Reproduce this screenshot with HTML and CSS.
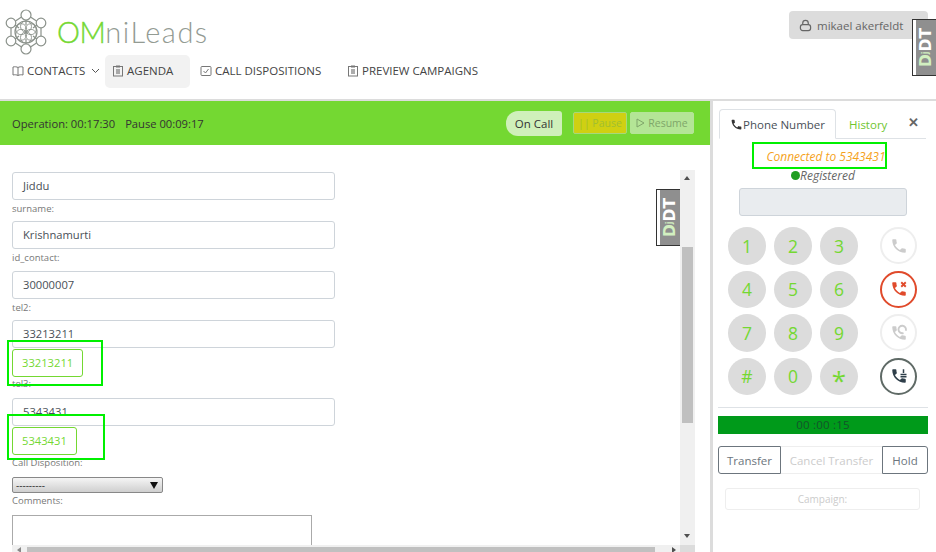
FILE: index.html
```html
<!DOCTYPE html>
<html lang="en">
<head>
<meta charset="utf-8">
<title>OMniLeads</title>
<link rel="stylesheet" href="styles.css">
</head>
<body>
<svg width="0" height="0" class="defs">
  <symbol id="phone" viewBox="0 0 24 24"><path d="M6.600 10.800c1.400 2.800 3.800 5.100 6.600 6.600l2.200-2.200c.3-.3.7-.4 1-.2 1.100.4 2.300.6 3.600.6.600 0 1 .4 1 1V20c0 .6-.4 1-1 1C10.600 21 3 13.400 3 4c0-.6.4-1 1-1h3.500c.6 0 1 .4 1 1 0 1.300.2 2.500.6 3.600.1.300 0 .7-.2 1z"/></symbol>
  <symbol id="clip" viewBox="0 0 12 12"><rect x="1.500" y="1.500" width="9" height="9.500" fill="none" stroke="currentColor" stroke-width="1"/><rect x="4" y="4" width="4" height="5" fill="currentColor" opacity=".6"/><rect x="4" y="0.500" width="4" height="2" fill="currentColor"/></symbol>
</svg>
<header class="top">
  <div class="brand-row">
    <div class="brand">
      <svg class="logo" width="44" height="48" viewBox="0 0 44 48" fill="none" stroke="#8b928b" stroke-width="1.200">
        <circle cx="21" cy="7" r="5"/><circle cx="21" cy="41" r="5"/>
        <circle cx="6" cy="15" r="4.800"/><circle cx="36" cy="15" r="4.800"/>
        <circle cx="6" cy="33" r="4.800"/><circle cx="36" cy="33" r="4.800"/>
        <path d="M21 12v5M21 31v5M10 17l4 3M32 17l-4 3M10 31l4-3M32 31l-4-3M6 20v8M36 20v8M10.500 13l6-4M31.500 13l-6-4M10.500 35l6 4M31.500 35l-6 4"/>
        <circle cx="21" cy="24" r="11"/>
        <g stroke-width=".9">
        <circle cx="21" cy="18.500" r="5.500"/><circle cx="21" cy="29.500" r="5.500"/>
        <circle cx="16.200" cy="21.200" r="5.500"/><circle cx="25.800" cy="21.200" r="5.500"/>
        <circle cx="16.200" cy="26.800" r="5.500"/><circle cx="25.800" cy="26.800" r="5.500"/>
        </g>
      </svg>
      <span class="wordmark"><span class="wm-green">OM</span>niLeads</span>
    </div>
    <button class="user">
      <svg width="13" height="13" viewBox="0 0 14 14" fill="none" stroke="#666" stroke-width="1.300"><path d="M4 6V4.500a3 3 0 0 1 6 0V6"/><rect x="1.500" y="6" width="11" height="6.500" rx="2.500"/></svg>
      <span>mikael akerfeldt</span>
    </button>
  </div>
  <nav class="nav">
    <a class="nav-item contacts"><svg width="12" height="12" viewBox="0 0 12 12" fill="none" stroke="currentColor"><path d="M6 2.500C5 1.800 2.500 1.500 1 2v8c1.500-.5 4-.2 5 .5 1-.7 3.500-1 5-.5V2C9.500 1.500 7 1.800 6 2.500zM6 2.500v8"/></svg>CONTACTS<svg class="chev" width="9" height="6" viewBox="0 0 9 6" fill="none" stroke="#555"><path d="M1 1l3.500 3.500L8 1"/></svg></a>
    <a class="nav-item agenda active"><svg width="12" height="12"><use href="#clip"/></svg>AGENDA</a>
    <a class="nav-item disp"><svg width="12" height="12" viewBox="0 0 12 12" fill="none" stroke="currentColor"><rect x="1" y="1.500" width="10" height="9" rx="1"/><path d="M3.500 6l2 2 3-4"/></svg>CALL DISPOSITIONS</a>
    <a class="nav-item"><svg width="12" height="12"><use href="#clip"/></svg>PREVIEW CAMPAIGNS</a>
  </nav>
</header>
<main class="layout">
  <section class="left">
    <div class="statusbar">
      <span class="timers"><span>Operation: 00:17:30</span><span>Pause 00:09:17</span></span>
      <span class="actions">
        <span class="oncall">On Call</span>
        <button class="act pause">||&nbsp;Pause</button>
        <button class="act resume"><svg width="9" height="10" viewBox="0 0 9 10" fill="none" stroke="currentColor"><path d="M1 1l7 4-7 4z"/></svg>Resume</button>
      </span>
    </div>
    <div class="scrollarea">
      <div class="viewport">
        <form class="form">
          <div class="input first">Jiddu</div>
          <label>surname:</label>
          <div class="input">Krishnamurti</div>
          <label class="id-label">id_contact:</label>
          <div class="input">30000007</div>
          <label>tel2:</label>
          <div class="input">33213211</div>
          <button type="button" class="dial-link">33213211</button>
          <label class="tel3">tel3:</label>
          <div class="input">5343431</div>
          <button type="button" class="dial-link">5343431</button>
          <label class="disp-label">Call Disposition:</label>
          <div class="select"><span>---------</span><span class="sel-arrow"></span></div>
          <label class="comment-label">Comments:</label>
          <div class="textarea"></div>
        </form>
        <div class="hbar"><span class="harrow left-a"></span><span class="hthumb"></span><span class="harrow right-a"></span></div>
      </div>
      <div class="vbar"><span class="varrow up"></span><span class="vthumb"></span><span class="varrow down"></span><span class="corner"></span></div>
    </div>
    <div class="ddt ddt-left"><span class="ddt-inner"><span class="ddt-d">D<small>j</small></span>DT</span></div>
    <div class="hl hl-one"></div>
    <div class="hl hl-two"></div>
  </section>
  <aside class="phone">
    <div class="tabs">
      <span class="tab active"><svg width="13" height="13"><use href="#phone"/></svg>Phone Number</span>
      <span class="tab hist">History</span>
      <span class="close">✕</span>
    </div>
    <div class="connected">Connected to 5343431</div>
    <div class="registered"><span class="dot"></span>Registered</div>
    <div class="display"></div>
    <div class="pad">
      <div class="keys">
        <span class="key">1</span><span class="key">2</span><span class="key">3</span>
        <span class="key">4</span><span class="key">5</span><span class="key">6</span>
        <span class="key">7</span><span class="key">8</span><span class="key">9</span>
        <span class="key">#</span><span class="key">0</span><span class="key star">*</span>
      </div>
      <div class="callbtns">
        <span class="cb off"><svg width="18" height="18"><use href="#phone"/></svg></span>
        <span class="cb hang"><svg width="18" height="18" viewBox="0 0 24 24"><use href="#phone" width="24" height="24"/><path class="x" d="M15 3l6 6M21 3l-6 6"/></svg></span>
        <span class="cb off"><svg width="18" height="18" viewBox="0 0 24 24"><use href="#phone" width="24" height="24"/><path class="arc" d="M21 9a5 5 0 1 0-3 3"/></svg></span>
        <span class="cb add"><svg width="18" height="18" viewBox="0 0 24 24"><use href="#phone" width="24" height="24"/><path class="plus" d="M14 10h8M14 13h8M18 3v5"/></svg></span>
      </div>
    </div>
    <div class="timer">00 :00 :15</div>
    <div class="group">
      <span class="g-btn on g-a">Transfer</span>
      <span class="g-btn dis g-b">Cancel Transfer</span>
      <span class="g-btn on g-c">Hold</span>
    </div>
    <div class="campaign">Campaign:</div>
    <div class="hl hl-conn"></div>
  </aside>
</main>
<div class="ddt ddt-top"><span class="ddt-inner"><span class="ddt-d">D<small>j</small></span>DT</span></div>
</body>
</html>
```
FILE: styles.css
```css
* { box-sizing: border-box; }
html, body { margin: 0; height: 552px; overflow: hidden; }
body { font-family: "Open Sans", "Noto Sans", sans-serif; font-size: 11.200px; color: #555; background: #fff; position: relative; }
.defs { position: absolute; }
button { font-family: inherit; }

.top { height: 99px; padding: 0 8px 0 5px; }
.brand-row { display: flex; justify-content: space-between; height: 55px; }
.brand { display: flex; align-items: center; gap: 8px; padding-top: 8px; height: 55px; }
.logo { display: block; }
.wordmark { font-family: "Lato", sans-serif; font-size: 29px; font-weight: 300; color: #939b93; letter-spacing: 1.500px; line-height: 1; }
.wm-green { color: #74d832; font-weight: 300; letter-spacing: -.5px; -webkit-text-stroke: .4px #74d832; }
.user { margin-top: 11px; width: 139px; height: 28px; border: 0; border-radius: 4px; background: #dcdcdc; color: #666; font-size: 11.500px; display: flex; align-items: center; gap: 5px; padding: 0 0 0 10px; }

.nav { display: flex; height: 33px; padding-left: 2px; }
.nav-item { display: flex; align-items: center; gap: 3px; height: 33px; padding: 0 5px 2px; color: #444; font-size: 11.500px; white-space: nowrap; }
.nav-item svg { color: #777; flex: none; }
.nav-item.contacts { width: 98px; }
.nav-item .chev { margin-left: 3px; }
.nav-item.agenda { width: 85px; padding-left: 7px; border-radius: 5px; }
.nav-item.active { background: #f2f2f2; }
.nav-item.disp { width: 152px; padding-left: 10px; }

.layout { display: flex; height: 453px; border-top: 2px solid #dcdcdc; }
.left { width: 710px; position: relative; display: flex; flex-direction: column; }
.statusbar { height: 44px; background: #74d832; display: flex; align-items: center; justify-content: space-between; padding: 0 16px 0 12px; color: #333; }
.timers { display: flex; gap: 10px; }
.actions { display: flex; align-items: center; }
.oncall { width: 56px; height: 25px; background: #cff0ba; border-radius: 12px 3px 3px 12px; display: flex; align-items: center; justify-content: center; font-size: 11.500px; color: #333; margin-right: 11px; }
.act { height: 22px; border-radius: 2px; font-size: 10.500px; display: flex; align-items: center; justify-content: center; gap: 3px; padding: 0; }
.pause { width: 54px; background: #cfd012; border: 1px solid #a6d87a; color: #9fbf30; margin-right: 3px; }
.resume { width: 64px; background: #b4e596; border: 1px solid #b4e596; color: #7fa56a; }

.scrollarea { flex: 1; display: flex; min-height: 0; padding-right: 15px; }
.viewport { flex: 1; min-width: 0; display: flex; flex-direction: column; }
.form { flex: 1; min-height: 0; overflow: hidden; padding: 27px 0 0 12px; }
.form label { display: block; font-size: 9.500px; line-height: 13px; color: #777; margin: 2px 0 5px; height: 14px; }
.form .id-label { margin-bottom: 6px; }
.input { width: 323px; height: 28px; border: 1px solid #ced4da; border-radius: 3px; padding: 0 10px; line-height: 26px; color: #495057; background: #fff; }
.dial-link { display: block; height: 28px; padding: 0 9px 1px; margin: 1px 0 0; border: 1px solid #74d832; border-radius: 3px; color: #74d832; background: #fff; font-size: 11.200px; }
.form .tel3 { margin: 0 0 7px; height: 14px; }
.form .disp-label { margin: 1px 0 7px; }
.form .comment-label { margin: 1px 0 7px; }
.select { width: 151px; height: 16px; border: 1px solid #888; border-radius: 2px; background: linear-gradient(#f5f5f5, #cfcfcf); display: flex; align-items: center; justify-content: space-between; padding: 0 4px 0 3px; font-size: 10px; color: #333; }
.sel-arrow { width: 0; height: 0; border-left: 4px solid transparent; border-right: 4px solid transparent; border-top: 7px solid #111; }
.textarea { width: 300px; height: 60px; border: 1px solid #aaa; }

.hbar { height: 7px; flex: none; background: #f0f0f0; margin-left: 12px; display: flex; align-items: center; position: relative; }
.hthumb { position: absolute; left: 15px; width: 628px; top: 2px; bottom: 0; background: #c0c0c0; }
.harrow { position: absolute; width: 0; height: 0; top: 2px; border-top: 3px solid transparent; border-bottom: 3px solid transparent; }
.left-a { left: 5px; border-right: 4px solid #888; }
.right-a { right: 4px; border-left: 4px solid #505050; }

.vbar { width: 15px; flex: none; margin-top: 25px; background: #f0f0f0; position: relative; }
.vthumb { position: absolute; top: 77px; left: 2px; right: 2px; height: 176px; background: #c0c0c0; }
.varrow { position: absolute; left: 4px; width: 0; height: 0; border-left: 3.500px solid transparent; border-right: 3.500px solid transparent; }
.up { top: 6px; border-bottom: 4px solid #505050; }
.down { bottom: 14px; border-top: 4px solid #505050; }
.corner { position: absolute; left: 0; right: 0; bottom: 0; height: 7px; background: #dcdcdc; }

.phone { flex: 1; min-width: 0; border-left: 3px solid #dcdcdc; position: relative; padding: 8px 8px 0 5px; }
.tabs { display: flex; height: 30px; border-bottom: 1px solid #dee2e6; position: relative; margin: 0 2px 0 1px; }
.tab { font-size: 11.500px; height: 30px; display: flex; align-items: center; }
.tab.active { width: 117px; border: 1px solid #dee2e6; border-bottom-color: #fff; border-radius: 4px 4px 0 0; justify-content: center; color: #495057; background: #fff; }
.tab.active svg { fill: #333; }
.tab.hist { color: #6fc52f; margin-left: 13px; }
.close { position: absolute; right: 7px; top: 4px; font-size: 13px; font-weight: 700; color: #666; }
.connected { margin-top: 10px; height: 20px; text-align: center; line-height: 15px; font-size: 12px; color: #f5a21b; font-style: italic; padding-left: 6px; }
.registered { display: flex; justify-content: center; align-items: center; height: 14px; margin-top: -1px; font-size: 12px; font-style: italic; color: #666; }
.dot { width: 9px; height: 9px; border-radius: 50%; background: #1f9e20; }
.display { width: 168px; height: 28px; margin: 6px 0 0 21px; background: #e9ecef; border: 1px solid #ced4da; border-radius: 3px; }
.pad { display: flex; height: 182px; margin: 10px 0 0; padding: 1px 0 0 10px; border-bottom: 1px solid #dee2e6; width: 210px; }
.keys { display: grid; grid-template-columns: repeat(3, 38px); grid-auto-rows: 37.500px; column-gap: 8px; row-gap: 6px; }
.key { width: 38px; height: 37.500px; border-radius: 50%; background: #dcdcdc; color: #74d832; font-size: 17.500px; display: flex; align-items: center; justify-content: center; }
.star { font-size: 26px; padding-top: 8px; }
.callbtns { display: grid; grid-auto-rows: 37.500px; row-gap: 6px; margin-left: 22px; }
.cb { width: 37px; height: 37px; border-radius: 50%; display: flex; align-items: center; justify-content: center; border: 2px solid #eee; }
.cb.off svg { fill: #ccc; }
.cb .arc { fill: none; stroke: #ccc; stroke-width: 2.500; }
.cb.hang { border-color: #e04a2b; }
.cb.hang svg { fill: #e04a2b; }
.cb .x { stroke: #e04a2b; stroke-width: 2.500; fill: none; }
.cb.add { border-color: #5f6a66; }
.cb.add svg { fill: #2f3f4a; }
.cb .plus { stroke: #2f3f4a; stroke-width: 2; fill: none; }
.timer { height: 18px; width: 210px; margin-top: 8px; background: #009a1a; color: #14532a; text-align: center; line-height: 18px; font-size: 11.500px; letter-spacing: .2px; }
.group { display: flex; height: 28px; width: 210px; margin-top: 12px; }
.g-btn { display: flex; align-items: center; justify-content: center; font-size: 11.500px; height: 28px; }
.on { border: 1px solid #6c757d; color: #6c757d; }
.g-a { width: 63px; border-radius: 3px 0 0 3px; }
.g-b { width: 101px; border: 1px solid #eee; border-width: 1px 0; color: #ccc; }
.g-c { width: 46px; border-radius: 0 3px 3px 0; }
.campaign { width: 195px; height: 22px; margin: 14px 0 0 7px; border: 1px solid #eee; border-radius: 3px; text-align: center; line-height: 20px; font-size: 10px; color: #ccc; }

.hl { position: absolute; border: 2px solid #00f000; pointer-events: none; }
.hl-one { left: 7px; top: 239px; width: 96px; height: 46px; }
.hl-two { left: 7px; top: 313px; width: 98px; height: 46px; }
.hl-conn { left: 39px; top: 41px; width: 135px; height: 27px; }

.ddt { position: absolute; width: 24px; height: 57px; border: 1px solid #333; padding-left: 3px; background: #fff; }
.ddt-top { right: 0; top: 19px; }
.ddt-left { left: 656px; top: 88px; }
.ddt-inner { display: block; height: 55px; background: #8f8f8f; color: #fff; font-family: "DejaVu Sans", sans-serif; font-weight: 700; font-size: 15.500px; line-height: 19px; writing-mode: vertical-rl; transform: rotate(180deg); text-align: center; white-space: nowrap; }
.ddt-d { color: #d2f0c0; }
.ddt-d small { font-size: 8px; }
```
